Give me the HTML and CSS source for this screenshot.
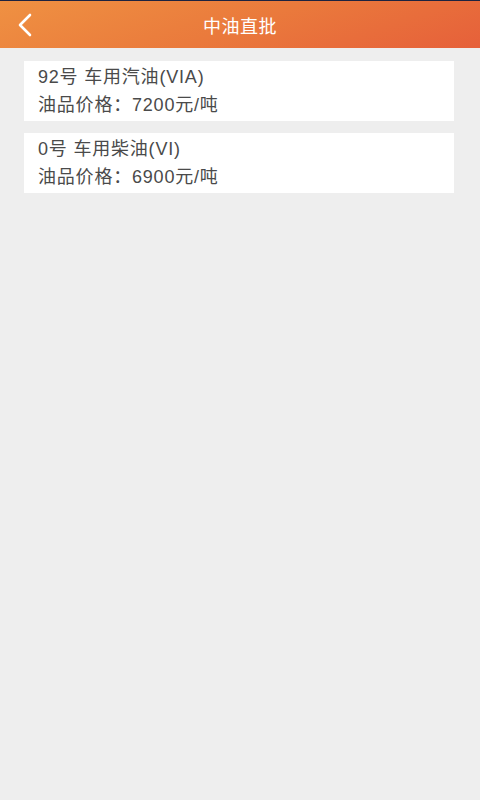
FILE: index.html
```html
<!DOCTYPE html>
<html lang="zh-CN">
<head>
    <meta charset="UTF-8">
    <meta name="viewport" content="width=device-width, initial-scale=1.0">
    <title>中油直批</title>
    <link rel="stylesheet" href="styles.css">
</head>
<body>
    <div class="topline"></div>
    <header class="navbar">
        <a class="back" href="#">
            <svg width="16" height="24" viewBox="0 0 16 24">
                <polyline points="13,2 3,12 13,22" fill="none" stroke="#fff" stroke-width="2.6" stroke-linecap="round" stroke-linejoin="round"/>
            </svg>
        </a>
        <h1 class="title">中油直批</h1>
    </header>

    <div class="list">
        <div class="item">
            <p class="name">92号 车用汽油(VIA)</p>
            <p class="price">油品价格：7200元/吨</p>
        </div>
        <div class="item">
            <p class="name">0号 车用柴油(VI)</p>
            <p class="price">油品价格：6900元/吨</p>
        </div>
    </div>
</body>
</html>
```

FILE: styles.css
```css
/* CSS */
body {
    margin: 0;
    padding: 0;
    background-color: #eeeeee;
    font-family: "Liberation Sans", "Noto Sans CJK SC", sans-serif;
    height: 800px;
}

.topline {
    height: 1px;
    background-color: #1d2340;
}

.navbar {
    position: relative;
    height: 47px;
    background: linear-gradient(160deg, #ef9142 0%, #ea7a3c 50%, #e6603a 100%);
    display: flex;
    align-items: center;
    justify-content: center;
}

.back {
    position: absolute;
    left: 17px;
    top: 12px;
    display: block;
    width: 16px;
    height: 24px;
}

.title {
    margin: 0;
    color: #fff;
    font-size: 18px;
    font-weight: normal;
    letter-spacing: 0.5px;
}

.list {
    padding: 13px 26px 0 24px;
    display: flex;
    flex-direction: column;
    gap: 12px;
}

.item {
    background: #fff;
    padding: 2px 14px;
}

.item p {
    margin: 0;
    line-height: 28px;
    font-size: 18px;
    letter-spacing: 0.8px;
    color: #4a4a4a;
}
```
